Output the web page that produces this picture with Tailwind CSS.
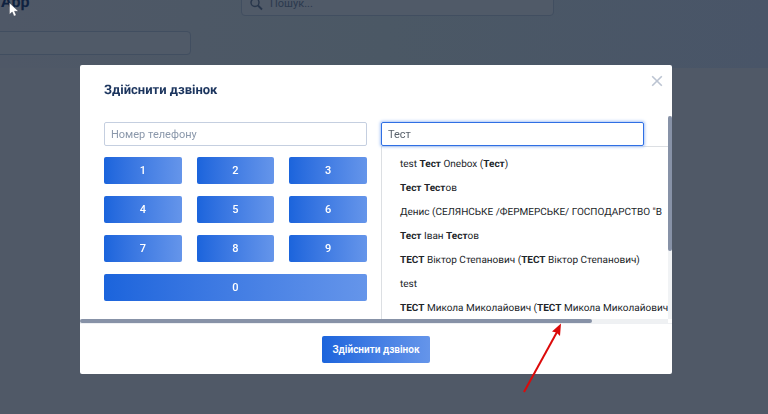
<!DOCTYPE html>
<html lang="uk">
<head>
    <meta charset="UTF-8">
    <meta name="viewport" content="width=device-width, initial-scale=1.0">
    <title>Здійснити дзвінок</title>
    <script src="https://cdn.jsdelivr.net/npm/@tailwindcss/browser@4"></script>
</head>
<body class="min-h-screen overflow-hidden bg-[#505967] font-[Roboto,'Liberation_Sans',sans-serif] text-[11px] [text-rendering:geometricPrecision]">

    <!-- Page behind the dialog -->
    <header class="h-[68px] overflow-hidden bg-linear-to-r from-[#4f5867] via-[#4b5865] to-[#495568]">
        <div class="-mt-2 flex h-6 items-start">
            <h1 class="w-[241px] pl-px text-[16px] leading-5 font-bold text-[#0f2240]">App</h1>
            <label class="flex h-6 w-[313px] items-center gap-2 rounded-sm border border-[#414e60] bg-[#505a68] pl-2">
                <svg class="size-[14px] shrink-0 text-[#28364b]" viewBox="0 0 14 14" fill="none" stroke="currentColor" stroke-width="1.4">
                    <circle cx="5" cy="5.5" r="4" />
                    <path d="M8 8.5 12 12.5" stroke-width="1.8" />
                </svg>
                <input type="search" placeholder="Пошук..." aria-label="Пошук" class="-ml-[2px] w-full bg-transparent outline-none placeholder:text-[#2b394e]">
            </label>
        </div>
        <input type="text" aria-label="Фільтр" class="mt-[15px] -ml-1 block h-6 w-[195px] rounded-sm border border-[#414e60] bg-[#505a68]">
    </header>

    <!-- Call dialog -->
    <div class="fixed inset-0 flex items-start pt-[65px] pr-24 pl-20">
        <div role="dialog" aria-labelledby="dialog-title" class="w-full overflow-hidden rounded-xs bg-white">
            <div class="flex h-[51px] items-center justify-between pr-[9px] pl-6">
                <h2 id="dialog-title" class="text-[13px] font-bold text-[#1c355e]">Здійснити дзвінок</h2>
                <button type="button" aria-label="Закрити" class="mb-5 text-[#bcc4d2]">
                    <svg class="size-3" viewBox="0 0 12 12" fill="none" stroke="currentColor" stroke-width="1.6">
                        <path d="M1.2 1.2 10.8 10.8M10.8 1.2 1.2 10.8" />
                    </svg>
                </button>
            </div>

            <div class="flex">
                <div class="relative flex h-[203px] min-w-0 flex-1 gap-[14px] overflow-hidden px-6 pt-[6px]">
                    <div class="flex-1">
                        <input type="tel" placeholder="Номер телефону" aria-label="Номер телефону" class="block h-6 w-full rounded-xs border border-[#c5cfe0] px-[6px] text-[#495057] outline-none placeholder:text-[#8b98ab]">
                        <div class="mt-[11px] grid grid-cols-3 gap-x-[15px] gap-y-3 font-medium text-white">
                            <button type="button" class="h-[27px] rounded-xs bg-linear-to-r from-[#1b64dc] to-[#6595ea] pt-[2px]">1</button>
                            <button type="button" class="h-[27px] rounded-xs bg-linear-to-r from-[#1b64dc] to-[#6595ea] pt-[2px]">2</button>
                            <button type="button" class="h-[27px] rounded-xs bg-linear-to-r from-[#1b64dc] to-[#6595ea] pt-[2px]">3</button>
                            <button type="button" class="h-[27px] rounded-xs bg-linear-to-r from-[#1b64dc] to-[#6595ea] pt-[2px]">4</button>
                            <button type="button" class="h-[27px] rounded-xs bg-linear-to-r from-[#1b64dc] to-[#6595ea] pt-[2px]">5</button>
                            <button type="button" class="h-[27px] rounded-xs bg-linear-to-r from-[#1b64dc] to-[#6595ea] pt-[2px]">6</button>
                            <button type="button" class="h-[27px] rounded-xs bg-linear-to-r from-[#1b64dc] to-[#6595ea] pt-[2px]">7</button>
                            <button type="button" class="h-[27px] rounded-xs bg-linear-to-r from-[#1b64dc] to-[#6595ea] pt-[2px]">8</button>
                            <button type="button" class="h-[27px] rounded-xs bg-linear-to-r from-[#1b64dc] to-[#6595ea] pt-[2px]">9</button>
                            <button type="button" class="col-span-3 h-[27px] rounded-xs bg-linear-to-r from-[#1b64dc] to-[#6595ea] pt-[2px]">0</button>
                        </div>
                    </div>
                    <div class="relative flex-1">
                        <input type="text" value="Тест" aria-label="Контакт" class="relative z-10 block h-6 w-full rounded-xs border border-[#2f6fe4] px-[6px] text-[#5a626c] shadow-[0_0_3px_1px_#a9c5f7] outline-none">
                        <!-- Suggestions, wider than the field -->
                        <ul class="absolute top-6 left-0 w-[420px] border border-[#dcdfe3] bg-white py-[6px] pl-[18px] text-[10px] leading-6 whitespace-nowrap text-[#212529]">
                            <li>test <b>Тест</b> Onebox (<b>Тест</b>)</li>
                            <li><b>Тест</b> <b>Тест</b>ов</li>
                            <li>Денис (СЕЛЯНСЬКЕ /ФЕРМЕРСЬКЕ/ ГОСПОДАРСТВО "В</li>
                            <li><b>Тест</b> Іван <b>Тест</b>ов</li>
                            <li><b>ТЕСТ</b> Віктор Степанович (<b>ТЕСТ</b> Віктор Степанович)</li>
                            <li>test</li>
                            <li><b>ТЕСТ</b> Микола Миколайович (<b>ТЕСТ</b> Микола Миколайович)</li>
                        </ul>
                    </div>
                </div>
                <!-- Vertical scrollbar -->
                <div class="w-1 bg-[#f1f3f5]">
                    <div class="h-2/3 rounded-full bg-[#8792a7]"></div>
                </div>
            </div>
            <!-- Horizontal scrollbar -->
            <div class="mr-1 h-1 bg-[#eff1f3]">
                <div class="h-1 w-[87%] rounded-full bg-[#8792a7]"></div>
            </div>

            <div class="flex h-[51px] items-center justify-center border-t border-[#eef0f3]">
                <button type="button" class="h-[27px] rounded-xs bg-linear-to-r from-[#1b64dc] to-[#6595ea] px-[10px] text-[10px] font-semibold text-white">Здійснити дзвінок</button>
            </div>
        </div>
    </div>

    <!-- Pointer and arrow over the page -->
    <svg class="absolute top-[2px] left-[9px] h-[15px] w-[10px]" viewBox="0 0 10 15">
        <path d="M.4.8V12.4L3.2 10 5 14.2 7.2 13.3 5.5 9.3H9.4Z" fill="#fff" stroke="#2a3140" stroke-width=".4" />
    </svg>
    <svg class="absolute top-[322px] left-[520px] h-[72px] w-[44px]" viewBox="0 0 44 72">
        <path d="M4 70 37 10" stroke="#dc0a0a" stroke-width="2" />
        <path d="M41 1.5 40 14 36.5 10.5 32 9.5Z" fill="#dc0a0a" />
    </svg>
</body>
</html>
